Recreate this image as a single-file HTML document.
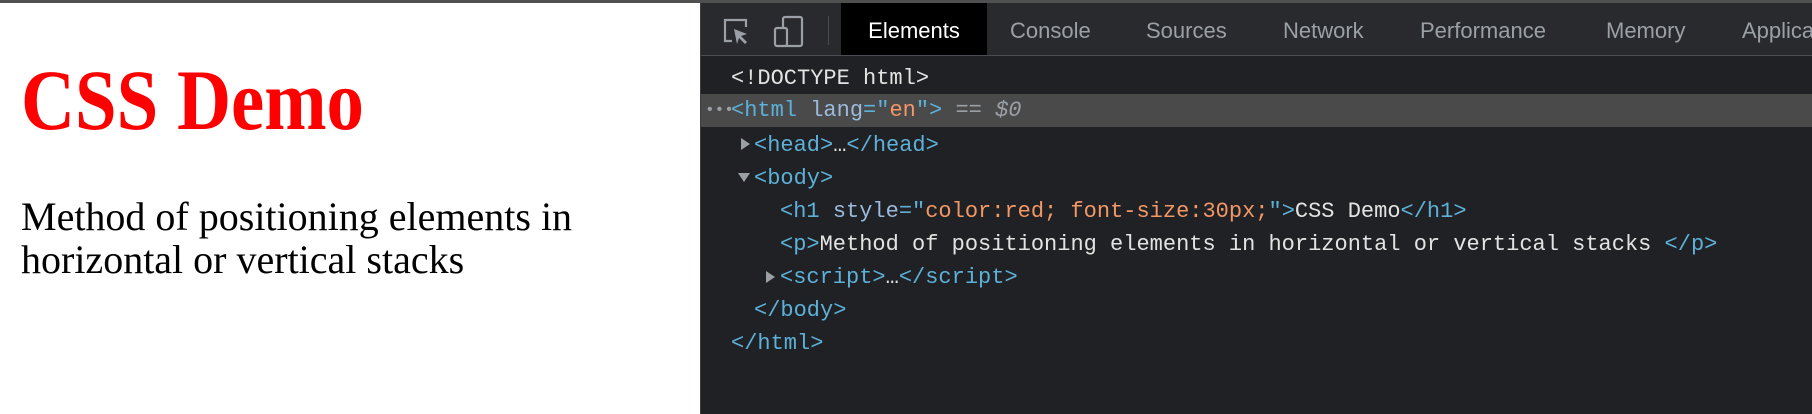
<!DOCTYPE html>
<html><head><style>
*{margin:0;padding:0;box-sizing:border-box}
body{width:1812px;height:414px;overflow:hidden;background:#fff;position:relative;font-family:"Liberation Sans",sans-serif}
#top{position:absolute;left:0;top:0;width:1812px;height:3px;background:#505050}
#page{position:absolute;left:0;top:3px;width:700px;height:411px;background:#fff}
h1{position:absolute;left:21px;top:47px;font-family:"Liberation Serif",serif;font-weight:bold;color:#ff0000;font-size:86px;line-height:100px;transform:scaleX(0.87);transform-origin:left top;white-space:nowrap}
p.t{position:absolute;left:21px;top:192px;width:620px;font-family:"Liberation Serif",serif;font-size:40px;line-height:43px;color:#000}
#dt{position:absolute;left:700px;top:3px;width:1112px;height:411px;background:#202124;border-left:1px solid #3d3d3d}
#bar{position:absolute;left:0;top:0;width:1112px;height:53px;background:#292a2d;border-bottom:1px solid #494c50}
.tab{position:absolute;top:0;height:52px;line-height:56px;font-size:22px;color:#9aa0a6}
.tab.on{background:#000;color:#fff}
#code{position:absolute;left:0;top:56px;width:1112px;font-family:"Liberation Mono",monospace;font-size:22px;color:#e3e3e3}
.ln{position:absolute;height:33px;line-height:33px;white-space:pre}
.tg{color:#5db0d7}.an{color:#9bbbdc}.av{color:#f29766}.gr{color:#9aa0a6}
.tri{position:absolute;width:0;height:0}
</style></head><body>
<div id="top"></div>
<div id="page">
<h1>CSS Demo</h1>
<p class="t">Method of positioning elements in horizontal or vertical stacks</p>
</div>
<div id="dt">
<div id="bar">
<svg style="position:absolute;left:21px;top:14px" width="30" height="30" viewBox="0 0 30 30"><path d="M10 24H3V3h21v7" fill="none" stroke="#9aa0a6" stroke-width="2.2"/><path d="M12 12l13 5-6 2 6 6-2 2-6-6-2 6z" fill="#9aa0a6"/></svg>
<svg style="position:absolute;left:72px;top:12px" width="32" height="34" viewBox="0 0 32 34"><rect x="10" y="2" width="19" height="29" rx="2" fill="none" stroke="#9aa0a6" stroke-width="2.2"/><rect x="2" y="13" width="12" height="18" rx="2" fill="#292a2d" stroke="#9aa0a6" stroke-width="2.2"/></svg>
<div style="position:absolute;left:127px;top:13px;width:1px;height:29px;background:#4a4c50"></div>
<div class="tab on" style="left:140px;width:146px;text-align:center">Elements</div>
<div class="tab" style="left:309px">Console</div>
<div class="tab" style="left:445px">Sources</div>
<div class="tab" style="left:582px">Network</div>
<div class="tab" style="left:719px">Performance</div>
<div class="tab" style="left:905px">Memory</div>
<div class="tab" style="left:1041px">Applica</div>
</div>
<div id="code">
<div class="ln" style="top:3px;left:30px">&lt;!DOCTYPE html&gt;</div>
<div style="position:absolute;left:0;top:35px;width:1112px;height:33px;background:#4a4a4a"></div>
<div class="ln gr" style="top:35px;left:4px;font-size:16px">•••</div>
<div class="ln" style="top:35px;left:30px"><span class="tg">&lt;html</span> <span class="an">lang</span><span class="tg">="</span><span class="av">en</span><span class="tg">"&gt;</span> <span class="gr">== <i>$0</i></span></div>
<div class="tri" style="left:40px;top:79px;border-left:9px solid #9aa0a6;border-top:6px solid transparent;border-bottom:6px solid transparent"></div>
<div class="ln" style="top:70px;left:53px"><span class="tg">&lt;head&gt;</span>…<span class="tg">&lt;/head&gt;</span></div>
<div class="tri" style="left:37px;top:114px;border-top:9px solid #9aa0a6;border-left:6px solid transparent;border-right:6px solid transparent"></div>
<div class="ln tg" style="top:103px;left:53px">&lt;body&gt;</div>
<div class="ln" style="top:136px;left:79px"><span class="tg">&lt;h1</span> <span class="an">style</span><span class="tg">="</span><span class="av">color:red; font-size:30px;</span><span class="tg">"&gt;</span>CSS Demo<span class="tg">&lt;/h1&gt;</span></div>
<div class="ln" style="top:169px;left:79px"><span class="tg">&lt;p&gt;</span>Method of positioning elements in horizontal or vertical stacks <span class="tg">&lt;/p&gt;</span></div>
<div class="tri" style="left:65px;top:212px;border-left:9px solid #9aa0a6;border-top:6px solid transparent;border-bottom:6px solid transparent"></div>
<div class="ln" style="top:202px;left:79px"><span class="tg">&lt;script&gt;</span>…<span class="tg">&lt;/script&gt;</span></div>
<div class="ln tg" style="top:235px;left:53px">&lt;/body&gt;</div>
<div class="ln tg" style="top:268px;left:30px">&lt;/html&gt;</div>
</div>
</div>
</body></html>
